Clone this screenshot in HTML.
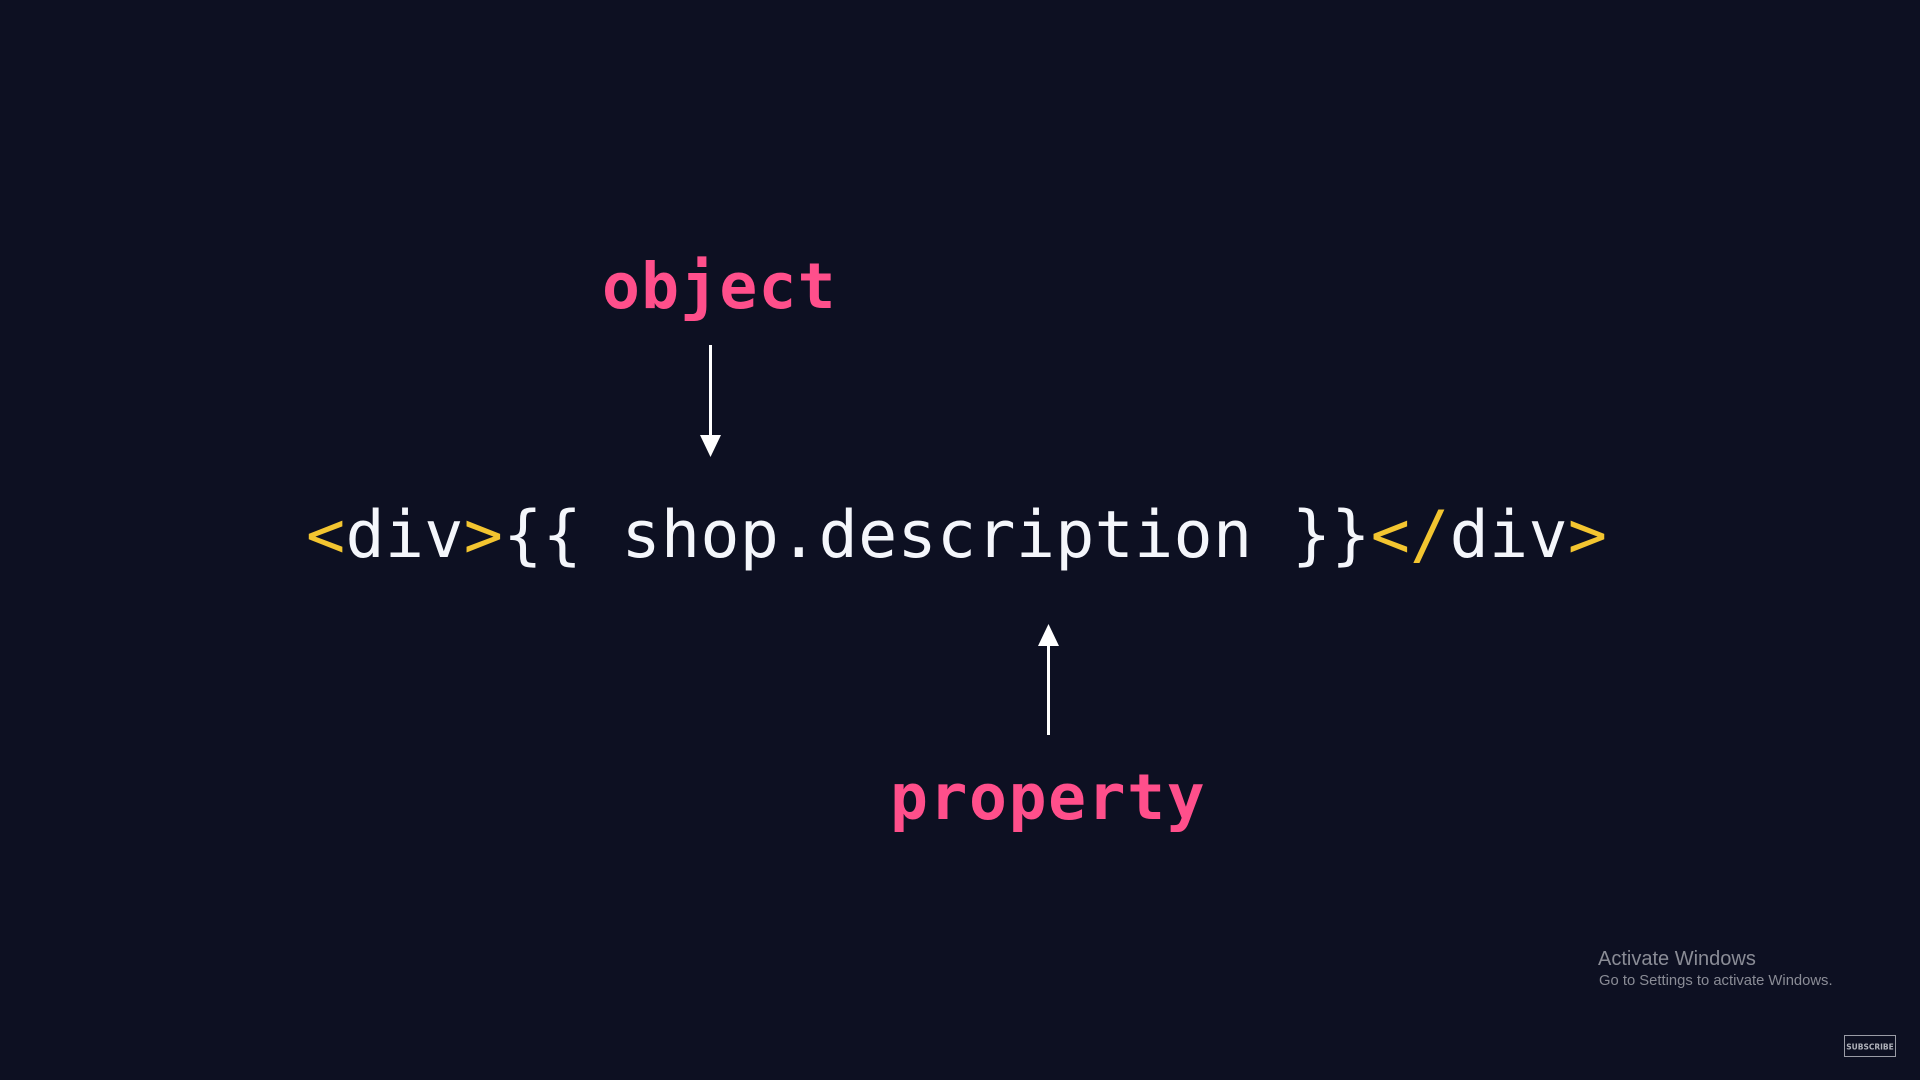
<!DOCTYPE html>
<html><head><meta charset="utf-8"><style>
html,body{margin:0;padding:0;width:1920px;height:1080px;background:#0d1022;overflow:hidden;position:relative}
.m{position:absolute;font-family:"DejaVu Sans Mono","Liberation Mono",monospace;white-space:pre;line-height:1}
.code{left:306px;top:503px;font-size:65px;color:#f4f6fb;letter-spacing:0.3px}
.y{color:#f3c530}
.pk{color:#ff4f8b;font-weight:bold;font-size:63px;letter-spacing:1.2px}
.win{position:absolute;font-family:"Liberation Sans",sans-serif;color:#8a8c96;white-space:nowrap}
</style></head><body>
<div class="m pk" style="left:602px;top:255px">object</div>
<div class="m code"><span class="y">&lt;</span>div<span class="y">&gt;</span>{{ shop.description }}<span class="y">&lt;/</span>div<span class="y">&gt;</span></div>
<div class="m pk" style="left:890px;top:766px;letter-spacing:1.6px">property</div>
<svg width="1920" height="1080" style="position:absolute;left:0;top:0">
<rect x="709" y="345" width="3" height="95" fill="#fff"/>
<polygon points="700,435 721,435 710.5,457" fill="#fff"/>
<rect x="1047" y="642" width="3" height="93" fill="#fff"/>
<polygon points="1038,646 1059,646 1048.5,624" fill="#fff"/>
<rect x="1844.5" y="1035.5" width="51" height="21" fill="none" stroke="#9a9ca6" stroke-width="1"/>
<text x="1870" y="1049.5" text-anchor="middle" font-family="DejaVu Sans" font-weight="bold" font-size="7.5" fill="#b0b2ba">SUBSCRIBE</text>
</svg>
<div class="win" style="left:1598px;top:948px;font-size:20px">Activate Windows</div>
<div class="win" style="left:1599px;top:973px;font-size:14.8px">Go to Settings to activate Windows.</div>
</body></html>
